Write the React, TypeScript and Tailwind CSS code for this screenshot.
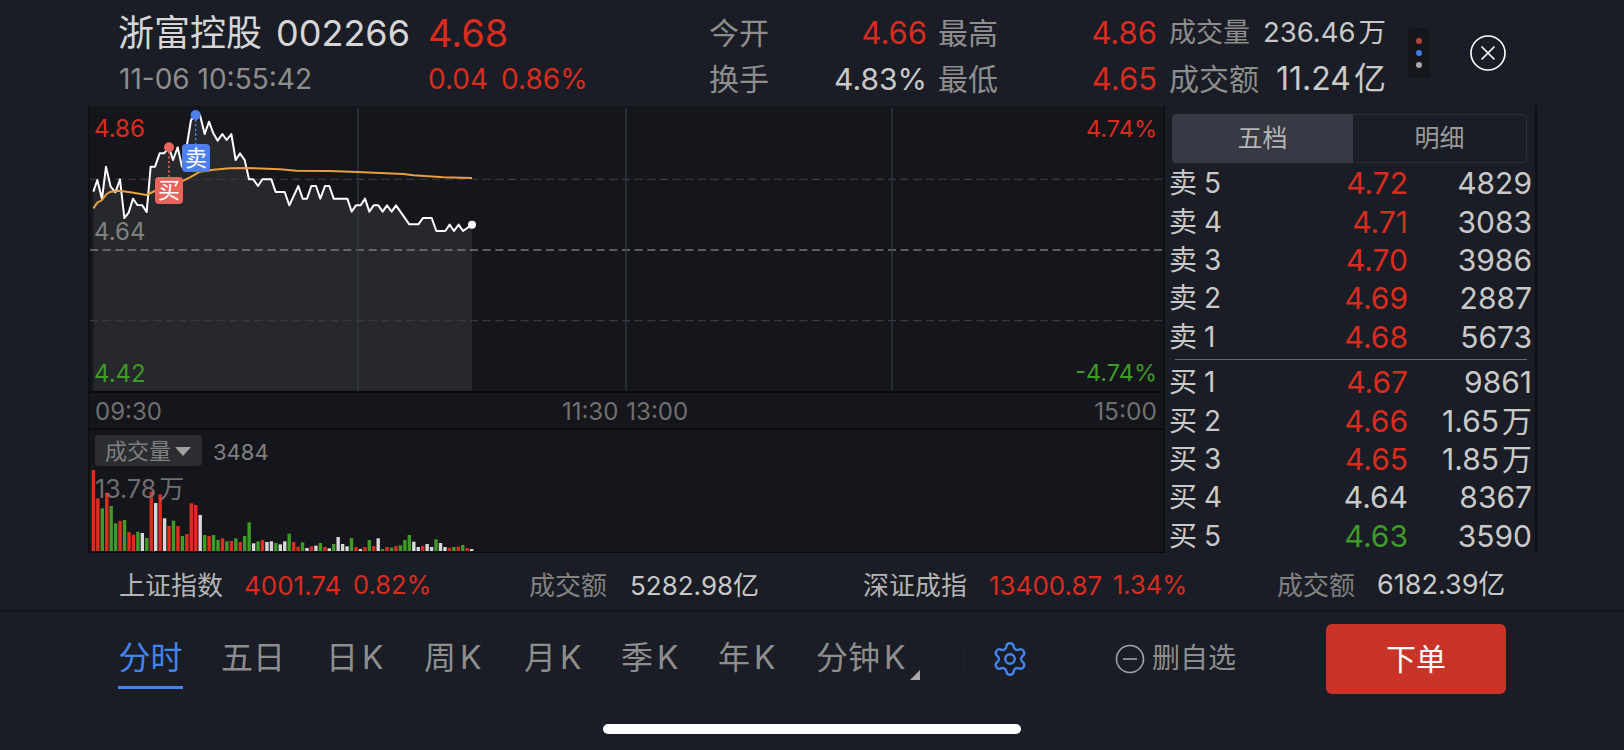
import React from "react";
import { Settings } from "lucide-react";

const RED = "text-[#d92c1f]";
const GREEN = "text-[#3f9a27]";
const LIGHT = "text-[#c9c9c9]";
const GRAY = "text-[#8e8e8e]";

const pricePts =
  "40,275 52,240 66,297 78,200 92,260 106,277 120,238 133,354 146,338 159,296 172,315 187,316 200,336 212,200 225,200 239,160 252,160 267,142 279,180 293,142 306,200 320,140 333,60 347,45 360,45 374,102 387,65 400,100 413,122 427,102 440,120 454,102 467,180 480,160 494,180 507,238 520,238 534,258 547,238 574,238 587,276 614,276 628,316 655,258 668,296 681,296 694,258 708,258 721,296 735,258 748,258 761,296 802,296 815,335 828,316 842,316 855,296 868,335 881,316 895,316 908,335 921,316 935,335 948,316 988,373 1015,373 1029,354 1055,354 1069,393 1096,393 1109,374 1122,393 1136,374 1149,393 1176,374";
const avgPts =
  "40,325 52,308 66,300 80,282 92,275 120,272 160,278 200,285 230,270 270,250 310,242 330,232 360,215 400,209 450,205 500,204 600,208 650,212 750,213 850,217 970,222 1000,226 1090,232 1176,234";

type C = "r" | "g" | "w";
const bars: [number, C][] = [
  [150,"r"],[235,"r"],[265,"g"],[218,"r"],[258,"g"],[310,"g"],[303,"r"],[300,"g"],[336,"r"],[344,"r"],[335,"g"],[339,"w"],[354,"g"],[215,"r"],[249,"w"],[223,"r"],[295,"w"],[318,"r"],[302,"g"],[318,"r"],[348,"g"],[342,"r"],[250,"r"],[255,"r"],[285,"w"],[345,"g"],[348,"r"],[345,"g"],[360,"g"],[355,"r"],[364,"g"],[363,"r"],[355,"g"],[366,"r"],[348,"g"],[307,"g"],[370,"w"],[364,"g"],[360,"r"],[366,"w"],[364,"w"],[369,"g"],[373,"w"],[364,"w"],[341,"g"],[366,"r"],[380,"r"],[367,"g"],[384,"w"],[379,"r"],[377,"w"],[369,"g"],[381,"r"],[385,"w"],[372,"g"],[351,"w"],[372,"w"],[379,"w"],[354,"g"],[381,"r"],[387,"w"],[381,"r"],[360,"g"],[378,"r"],[355,"w"],[387,"g"],[381,"r"],[383,"g"],[378,"r"],[376,"g"],[360,"g"],[345,"g"],[365,"w"],[381,"w"],[378,"r"],[372,"w"],[381,"w"],[358,"g"],[369,"w"],[381,"w"],[384,"r"],[381,"g"],[380,"r"],[375,"g"],[384,"r"],[387,"w"],
];
const barColor: Record<C, string> = { r: "#de2d1f", g: "#3f9a27", w: "#d8d8d8" };

function Unit({ children }: { children: React.ReactNode }) {
  return <span className="ml-[3px]">{children}</span>;
}

function Stat({ label, value, valueClass }: { label: string; value: string; valueClass: string }) {
  return (
    <div className="flex h-[44px] items-center justify-between">
      <span className={`text-[30px] ${GRAY}`}>{label}</span>
      <span className={valueClass}>{value}</span>
    </div>
  );
}

const STAT_RED = `text-[31px] ${RED}`;

function Header() {
  return (
    <div className="flex h-[106px] pl-[118px] pt-[11px]">
      <div className="flex w-[310px] flex-col gap-[2px]">
        <div className="flex h-[44px] items-center text-[#d6d6d6]">
          <span className="text-[36px]">浙富控股</span>
          <span className="ml-[14px] text-[36px]">002266</span>
        </div>
        <div className={`ml-px flex h-[44px] items-center text-[28px] ${GRAY}`}>11-06 10:55:42</div>
      </div>
      <div className="flex w-[281px] flex-col gap-[2px]">
        <div className={`flex h-[44px] items-center text-[38px] ${RED}`}>4.68</div>
        <div className={`flex h-[44px] items-center gap-[13px] text-[28px] ${RED}`}>
          <span>0.04</span>
          <span>0.86%</span>
        </div>
      </div>
      <div className="flex w-[218px] flex-col gap-[2px]">
        <Stat label="今开" value="4.66" valueClass={STAT_RED} />
        <Stat label="换手" value="4.83%" valueClass={`text-[30px] ${LIGHT}`} />
      </div>
      <div className="ml-[11px] flex w-[219px] flex-col gap-[2px]">
        <Stat label="最高" value="4.86" valueClass={STAT_RED} />
        <Stat label="最低" value="4.65" valueClass={STAT_RED} />
      </div>
      <div className="ml-[12px] flex w-[217px] flex-col gap-[2px]">
        <div className="flex h-[44px] items-center justify-between">
          <span className={`text-[27px] ${GRAY}`}>成交量</span>
          <span className={`text-[27.5px] ${LIGHT}`}>236.46<Unit>万</Unit></span>
        </div>
        <div className="flex h-[44px] items-center justify-between">
          <span className={`text-[30px] ${GRAY}`}>成交额</span>
          <span className={`text-[32px] ${LIGHT}`}>11.24<Unit>亿</Unit></span>
        </div>
      </div>
      <div className="ml-[22px] mt-[17px] flex h-[50px] w-[22px] flex-col items-center justify-center gap-[6px] rounded-[4px] bg-[#14161b]">
        <span className="h-[6px] w-[6px] rounded-full bg-[#b0493a]" />
        <span className="h-[6px] w-[6px] rounded-full bg-[#3f7fe8]" />
        <span className="h-[6px] w-[6px] rounded-full bg-[#a9a9a9]" />
      </div>
      <svg className="ml-[40px] mt-[24px]" width="36" height="36" viewBox="0 0 36 36" fill="none" stroke="#ffffff" strokeWidth="1.6">
        <circle cx="18" cy="18" r="17" />
        <path d="M11.5 11.5L24.5 24.5M24.5 11.5L11.5 24.5" />
      </svg>
    </div>
  );
}

function MainChart() {
  return (
    <div className="relative h-[285px] bg-[#15161b]">
      <svg className="absolute inset-0" width="1073" height="285" viewBox="30 18 3219 855" fill="none">
        <polygon points={`40,872 ${pricePts} 1176,872`} fill="#27282c" />
        <line x1="30" x2="3249" y1="238" y2="238" stroke="#363842" strokeWidth="3.5" strokeDasharray="24 14" />
        <line x1="30" x2="3249" y1="450" y2="450" stroke="#a3a3a3" strokeWidth="3.5" strokeDasharray="24 14" />
        <line x1="30" x2="3249" y1="662" y2="662" stroke="#363842" strokeWidth="3.5" strokeDasharray="24 14" />
        <line x1="834" x2="834" y1="24" y2="872" stroke="#3a3d48" strokeWidth="3.5" />
        <line x1="1638" x2="1638" y1="24" y2="872" stroke="#3a3d48" strokeWidth="3.5" />
        <line x1="2436" x2="2436" y1="24" y2="872" stroke="#3a3d48" strokeWidth="3.5" />
        <polyline points={pricePts} stroke="#ffffff" strokeWidth="6" strokeLinejoin="round" />
        <polyline points={avgPts} stroke="#e8a03f" strokeWidth="6" strokeLinejoin="round" />
        <line x1="267" x2="267" y1="155" y2="230" stroke="#e8655e" strokeWidth="4.5" strokeDasharray="7 7" />
        <line x1="347" x2="347" y1="58" y2="133" stroke="#4f7fec" strokeWidth="4.5" strokeDasharray="7 7" />
        <circle cx="267" cy="142" r="15" fill="#e8655e" />
        <circle cx="347" cy="45" r="15" fill="#4f7fec" />
        <circle cx="1176" cy="374" r="12" fill="#ffffff" />
      </svg>
      <span className={`absolute left-[4px] top-[5px] text-[24px] ${RED}`}>4.86</span>
      <span className="absolute left-[4px] top-[108px] text-[24px] text-[#808080]">4.64</span>
      <span className={`absolute left-[4px] top-[250px] text-[24px] ${GREEN}`}>4.42</span>
      <span className={`absolute right-[6px] top-[5px] text-[23.5px] ${RED}`}>4.74%</span>
      <span className={`absolute right-[6px] top-[249px] text-[23.5px] ${GREEN}`}>-4.74%</span>
      <span className="absolute left-[65px] top-[71px] flex h-[27px] w-[28px] items-center justify-center rounded-[4px] bg-[#e8655e] text-[22px] text-white">买</span>
      <span className="absolute left-[92px] top-[38px] flex h-[28px] w-[28px] items-center justify-center rounded-[4px] bg-[#4f7fec] text-[22px] text-white">卖</span>
    </div>
  );
}

function TimeAxis() {
  return (
    <div className="flex h-[35px] items-center bg-[#15161b] pl-[5px] pr-[6px] pt-[2px] text-[24px] text-[#707070]">
      <span>09:30</span>
      <span className="ml-[400px]">11:30</span>
      <span className="ml-[8px]">13:00</span>
      <span className="ml-auto text-[24.5px]">15:00</span>
    </div>
  );
}

function Volume() {
  return (
    <div className="relative h-[122px] bg-[#15161b]">
      <svg className="absolute inset-0" width="1073" height="122" viewBox="0 0 1073 122">
        {bars.map(([top, c], i) => {
          const h = (393 - top) / 3;
          return <rect key={i} x={1.7 + i * 4.45} y={121 - h} width={3.4} height={h} fill={barColor[c]} />;
        })}
      </svg>
      <div className="absolute left-[5px] top-[5px] flex items-start">
        <div className="flex h-[31px] w-[107px] items-center rounded-[4px] bg-[#2b2d31] pl-[10px] pt-[2px] text-[22px] text-[#808080]">
          <span>成交量</span>
          <span className="ml-[4px] h-0 w-0 border-x-[8px] border-t-[9px] border-x-transparent border-t-[#a0a0a0]" />
        </div>
        <span className="ml-[11px] mt-px text-[22px] text-[#808080]">3484</span>
      </div>
      <span className="absolute left-[5px] top-[41px] text-[25px] text-[#707070]">13.78<Unit>万</Unit></span>
    </div>
  );
}

function QuoteRow({ label, n, price, priceClass, qty }: { label: string; n: number; price: string; priceClass: string; qty: React.ReactNode }) {
  return (
    <div className="flex h-[38.4px] shrink-0 items-center text-[30px] leading-none">
      <span className={`w-[35px] text-[28px] ${LIGHT}`}>{label}</span>
      <span className={`w-[30px] text-[28px] ${LIGHT}`}>{n}</span>
      <span className={`w-[174px] text-right ${priceClass}`}>{price}</span>
      <span className={`w-[124px] text-right ${LIGHT}`}>{qty}</span>
    </div>
  );
}

function OrderBook() {
  return (
    <div className="h-[447px] w-[374px] shrink-0 border-x-[2px] border-x-[#0f1013] pl-[4px] pt-[8px]">
      <div className="ml-[3px] flex h-[49px] w-[355px] text-[25px]">
        <div className="flex w-[181px] items-center justify-center rounded-l-[4px] bg-[#373a45] text-[#b4b4b4]">五档</div>
        <div className="flex flex-1 items-center justify-center rounded-r-[4px] border border-l-0 border-[#2a2d36] text-[#9a9a9a]">明细</div>
      </div>
      <div className="mt-px">
        <QuoteRow label="卖" n={5} price="4.72" priceClass={RED} qty="4829" />
        <QuoteRow label="卖" n={4} price="4.71" priceClass={RED} qty="3083" />
        <QuoteRow label="卖" n={3} price="4.70" priceClass={RED} qty="3986" />
        <QuoteRow label="卖" n={2} price="4.69" priceClass={RED} qty="2887" />
        <QuoteRow label="卖" n={1} price="4.68" priceClass={RED} qty="5673" />
      </div>
      <div className="ml-[6px] mt-[3px] h-px w-[352px] bg-[#6a6c72]" />
      <div className="mt-[3px]">
        <QuoteRow label="买" n={1} price="4.67" priceClass={RED} qty="9861" />
        <QuoteRow label="买" n={2} price="4.66" priceClass={RED} qty={<>1.65<Unit>万</Unit></>} />
        <QuoteRow label="买" n={3} price="4.65" priceClass={RED} qty={<>1.85<Unit>万</Unit></>} />
        <QuoteRow label="买" n={4} price="4.64" priceClass={LIGHT} qty="8367" />
        <QuoteRow label="买" n={5} price="4.63" priceClass={GREEN} qty="3590" />
      </div>
    </div>
  );
}

function Ticker() {
  return (
    <div className="flex h-[59px] items-center border-b-[2px] border-b-[#14161b] pl-[119px] pt-[7px] text-[26px]">
      <span className="w-[125px] text-[#b4b4b4]">上证指数</span>
      <span className={`w-[109px] ${RED}`}>4001.74</span>
      <span className={`w-[176px] text-[25.5px] ${RED}`}>0.82%</span>
      <span className="w-[101px] text-[#828282]">成交额</span>
      <span className={`w-[233px] ${LIGHT}`}>5282.98亿</span>
      <span className="w-[126px] text-[#b4b4b4]">深证成指</span>
      <span className={`w-[124px] ${RED}`}>13400.87</span>
      <span className={`w-[164px] text-[25.5px] ${RED}`}>1.34%</span>
      <span className="w-[100px] text-[#828282]">成交额</span>
      <span className={`text-[27px] ${LIGHT}`}>6182.39亿</span>
    </div>
  );
}

function Tabs() {
  const tabs: [string, string][] = [
    ["五日", "w-[105px]"],
    ["日 K", "w-[98px]"],
    ["周 K", "w-[100px]"],
    ["月 K", "w-[97px]"],
    ["季 K", "w-[97px]"],
    ["年 K", "w-[98px]"],
  ];
  return (
    <div className="flex h-[138px] flex-col">
      <div className="flex h-[84px] pl-[118px] pt-[18px] text-[32px] text-[#8e8e8e] [word-spacing:-5px]">
        <div className="w-[103px]">
          <div className="flex h-[55px] w-[65px] items-center justify-center text-[#4384ee]">分时</div>
          <div className="mt-px h-[3px] w-[65px] bg-[#4384ee]" />
        </div>
        {tabs.map(([t, w]) => (
          <div key={t} className={`flex h-[55px] items-center ${w}`}>{t}</div>
        ))}
        <div className="relative flex h-[55px] w-[147px] items-center">
          <span>分钟 K</span>
          <span className="absolute left-[94px] top-[40px] h-0 w-0 border-b-[10px] border-l-[10px] border-b-[#a8a8a8] border-l-transparent" />
        </div>
        <div className="mt-[15px] h-[27px] w-px bg-[#23262e]" />
        <Settings className="ml-[27px] mt-[10px]" size={38} strokeWidth={1.5} color="#4384ee" />
        <svg className="ml-[86px] mt-[14px]" width="30" height="30" viewBox="0 0 30 30" fill="none" stroke="#a3a3a3" strokeWidth="1.6">
          <circle cx="15" cy="15" r="13.5" />
          <path d="M8 15H22" />
        </svg>
        <span className="ml-[7px] mt-[4px] flex h-[48px] items-center text-[28px]">删自选</span>
        <button className="ml-[90px] -mt-[6px] flex h-[70px] w-[180px] items-center justify-center rounded-[6px] bg-[#cb3329] text-[30px] text-white">下单</button>
      </div>
      <div className="ml-[603px] mt-[28px] h-[10px] w-[418px] rounded-full bg-white" />
    </div>
  );
}

export default function App() {
  return (
    <div className="h-[750px] w-[1624px] overflow-hidden bg-[#1a1d25] font-['Inter','Noto_Sans_CJK_SC',sans-serif]">
      <Header />
      <div className="ml-[88px] flex h-[447px] w-[1449px]">
        <div className="h-[447px] w-[1075px] shrink-0 border-l-[2px] border-l-[#0f1013]">
          <MainChart />
          <div className="h-[2px] bg-[#0a0b0d]" />
          <TimeAxis />
          <div className="h-[2px] bg-[#0a0b0d]" />
          <Volume />
          <div className="h-px bg-[#0a0b0d]" />
        </div>
        <OrderBook />
      </div>
      <Ticker />
      <Tabs />
    </div>
  );
}
